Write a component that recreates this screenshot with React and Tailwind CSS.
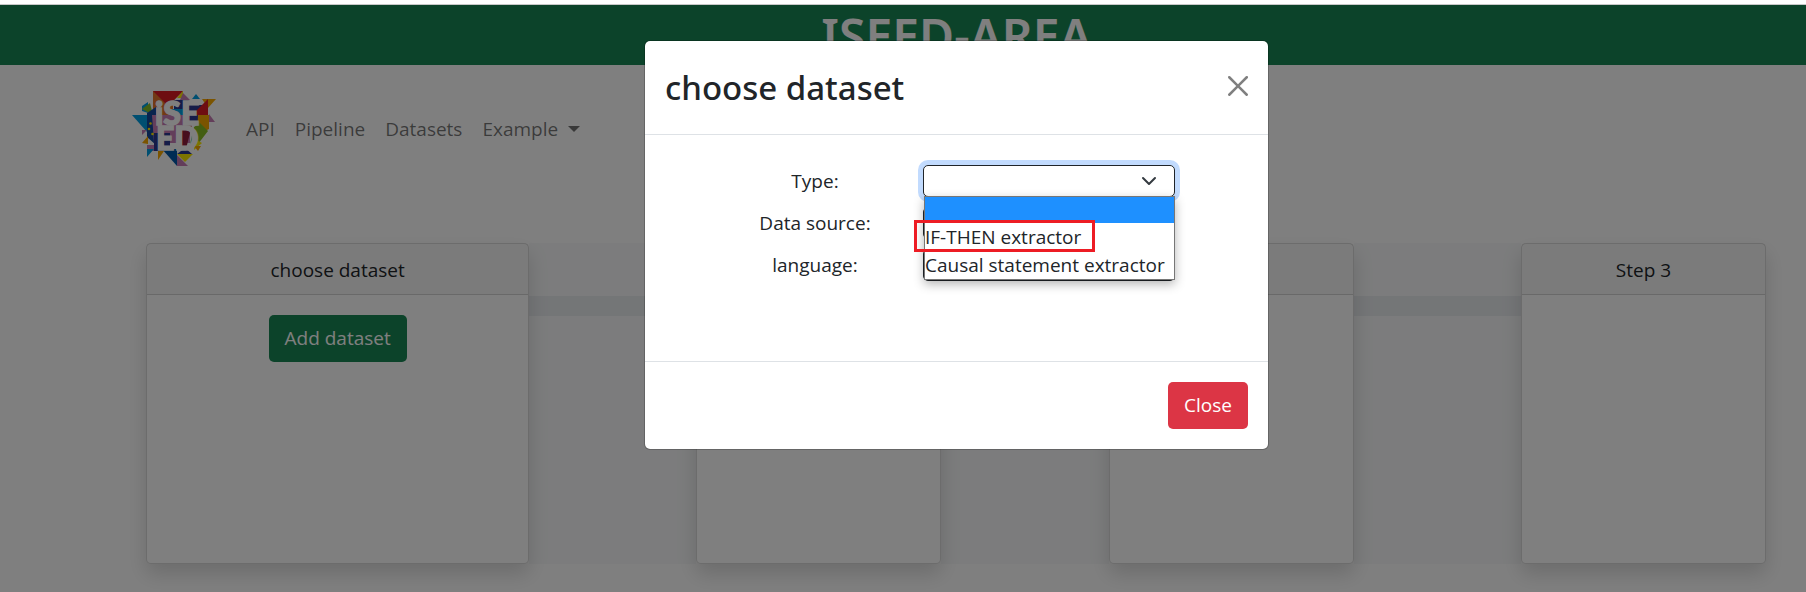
import React from "react";

const NAV = ["API", "Pipeline", "Datasets"];

function Logo() {
  return (
    <svg viewBox="0 0 88 80" className="h-20 w-[88px]" role="img" aria-label="iSEED">
      <g>
        <path d="M23 2H53L43 12V40H23Z" fill="#e5752a" />
        <path d="M23 2H53L38 17Z" fill="#dc1a22" />
        <path d="M53 2V9H47Z" fill="#fbe900" />
        <path d="M53 4L60 11H50Z" fill="#c77db5" />
        <path d="M66 5L70 10H62Z" fill="#009fe3" />
        <path d="M44 11H58L66 16H74V34H44Z" fill="#2b3990" />
        <path d="M40 20H56V30H40Z" fill="#009fe3" />
        <path d="M72 10H86L78 19Z" fill="#f6a800" />
        <path d="M78 10V26H66V22Z" fill="#dc1a22" />
        <path d="M79 25V33H85Z" fill="#c77db5" />
        <path d="M68 26H79V40L67 46Z" fill="#f6a800" />
        <path d="M64 38L70 34L78 42L68 55H60Z" fill="#86bc25" />
        <path d="M2 26H17V43Z" fill="#009fe3" />
        <path d="M12 17L18 13V24L12 22Z" fill="#009fe3" />
        <path d="M12 20L20 14L23 26Z" fill="#86bc25" />
        <path d="M17 24L26 18V56L17 48Z" fill="#12489b" />
        <path d="M22 26H60V54H24Z" fill="#c77db5" />
        <path d="M24 44H40V62H24Z" fill="#2b3990" />
        <path d="M52 36H62L56 60H50Z" fill="#8e1c3c" />
        <path d="M12 41H17L12 46Z" fill="#c77db5" />
        <path d="M12 54L18 47V55Z" fill="#f6a800" />
        <path d="M17 56H24V62H17Z" fill="#c77db5" />
        <path d="M17 60H24L17 68Z" fill="#009fe3" />
        <path d="M28 62H34L28 71Z" fill="#f6a800" />
        <path d="M32 60H47V77Z" fill="#0058a8" />
        <path d="M47 66L58 77H47Z" fill="#c77db5" />
        <path d="M47 65H63L55 73Z" fill="#fbe900" />
        <path d="M47 65L55 59L62 65Z" fill="#2b3990" />
        <path d="M65 50L72 54L64 61Z" fill="#fbe900" />
        <path d="M64 57H71L68 62Z" fill="#f6a800" />
      </g>
      <g fill="#fbe900">
        <circle cx="20.500" cy="34.500" r="1.300" />
        <circle cx="19" cy="40" r="1.300" />
        <circle cx="22.500" cy="45" r="1.300" />
      </g>
      <text fill="#fff" stroke="#fff" strokeWidth="1.4" fontFamily="Lato, sans-serif" fontWeight="900" fontSize="32">
        <tspan x="25" y="36">iSE</tspan>
        <tspan x="26" y="61">ED</tspan>
      </text>
    </svg>
  );
}

function Card({ title, children }) {
  return (
    <section className="relative flex h-[321px] flex-col rounded-[5px] border border-black/15 bg-white text-center shadow-[0_10px_20px_rgba(0,0,0,0.15)]">
      <h2 className="min-h-[51px] border-b border-black/15 bg-black/3 px-5 pt-[11px] pb-[9px] leading-[30px]">{title}</h2>
      <div className="p-5">{children}</div>
    </section>
  );
}

function Connector() {
  return (
    <div className="bg-[#f8f9fa] pt-[53px]">
      <div className="h-5 bg-[#e9ecef]" />
    </div>
  );
}

function Field({ id, label, active }) {
  return (
    <div className="grid grid-cols-[216px_1fr] items-center">
      <label htmlFor={id} className="text-center leading-8">{label}</label>
      <div className="relative">
        <select
          id={id}
          className={
            "block h-8 w-[252px] appearance-none rounded-[5px] border border-[#212529] bg-white px-5 " +
            (active ? "shadow-[0_0_0_5px_#c2dbfe]" : "")
          }
        >
          <option></option>
          {active && <option>IF-THEN extractor</option>}
          {active && <option>Causal statement extractor</option>}
        </select>
        {active && (
          <svg viewBox="0 0 16 16" className="pointer-events-none absolute top-2 left-[218px] size-4" fill="none" stroke="#343a40" strokeWidth="2" strokeLinecap="round" strokeLinejoin="round">
            <path d="M2 5l6 6 6-6" />
          </svg>
        )}
        {active && (
          <ul role="listbox" aria-label="Type options" className="absolute top-[31px] left-px z-10 w-[251px] border border-[#767676] bg-white leading-7 shadow-[0_4px_10px_rgba(0,0,0,0.3)]">
            <li role="option" aria-selected="true" className="h-[26px] bg-[#1e90ff]" />
            <li role="option" aria-selected="false" className="relative h-7 whitespace-nowrap">
              IF-THEN extractor
              <span className="absolute -top-[3px] -left-[11px] h-8 w-[181px] border-[3px] border-[#ed1c24]" />
            </li>
            <li role="option" aria-selected="false" className="h-7 whitespace-nowrap">Causal statement extractor</li>
          </ul>
        )}
      </div>
    </div>
  );
}

export default function App() {
  return (
    <div className="relative min-h-screen overflow-hidden bg-white pt-1 font-['Open_Sans','Noto_Sans',sans-serif] text-[19px] text-[#212529]">
      <div className="relative min-h-[588px] border-t border-[#c8c8c8] bg-white">
        <header className="h-[60px] bg-[#198754] pl-[107px] text-center">
          <h1 className="font-['Noto_Sans',sans-serif] text-[48px] leading-[62px] font-semibold text-white">ISEED-AREA</h1>
        </header>
        <nav className="flex items-center gap-5 px-[130px] pt-6 text-black/55">
          <Logo />
          <div className="flex items-center gap-5 pl-2">
            {NAV.map((n) => (
              <a key={n} href="#">{n}</a>
            ))}
            <a href="#" className="flex items-center gap-[10px]">
              Example
              <svg viewBox="0 0 12 6" className="h-[6px] w-3" fill="currentColor"><path d="M0 0h12L6 6z" /></svg>
            </a>
          </div>
        </nav>
        <main className="mt-[74px] mr-10 ml-[146px] grid grid-cols-[383fr_167fr_245fr_167fr_245fr_167fr_245fr]">
          <Card title="choose dataset">
            <button type="button" className="h-[47px] rounded-[5px] bg-[#198754] px-4 text-white">Add dataset</button>
          </Card>
          <Connector />
          <Card />
          <Connector />
          <Card />
          <Connector />
          <Card title="Step 3" />
        </main>
        <div className="absolute inset-0 flex items-start justify-center bg-black/50 pt-[35px] pl-[107px]">
          <div role="dialog" aria-modal="true" aria-labelledby="dialog-title" className="w-[625px] rounded-md border border-black/20 bg-white bg-clip-padding">
            <div className="flex items-center justify-between border-b border-[#dee2e6] p-5">
              <h2 id="dialog-title" className="font-['Noto_Sans',sans-serif] text-[33px] leading-[53px] font-medium">choose dataset</h2>
              <button type="button" aria-label="Close dialog" className="-mt-1 text-black/50">
                <svg viewBox="0 0 16 16" className="size-5" fill="currentColor">
                  <path d="M.293.293a1 1 0 011.414 0L8 6.586 14.293.293a1 1 0 111.414 1.414L9.414 8l6.293 6.293a1 1 0 01-1.414 1.414L8 9.414l-6.293 6.293a1 1 0 01-1.414-1.414L6.586 8 .293 1.707a1 1 0 010-1.414z" />
                </svg>
              </button>
            </div>
            <div className="flex h-[226px] flex-col gap-[10px] pt-[30px] pl-[62px]">
              <Field id="type" label="Type:" active />
              <Field id="source" label="Data source:" />
              <Field id="language" label="language:" />
            </div>
            <div className="flex justify-end border-t border-[#dee2e6] p-5">
              <button type="button" className="h-[47px] rounded-[5px] bg-[#dc3545] px-4 text-white">Close</button>
            </div>
          </div>
        </div>
      </div>
    </div>
  );
}
